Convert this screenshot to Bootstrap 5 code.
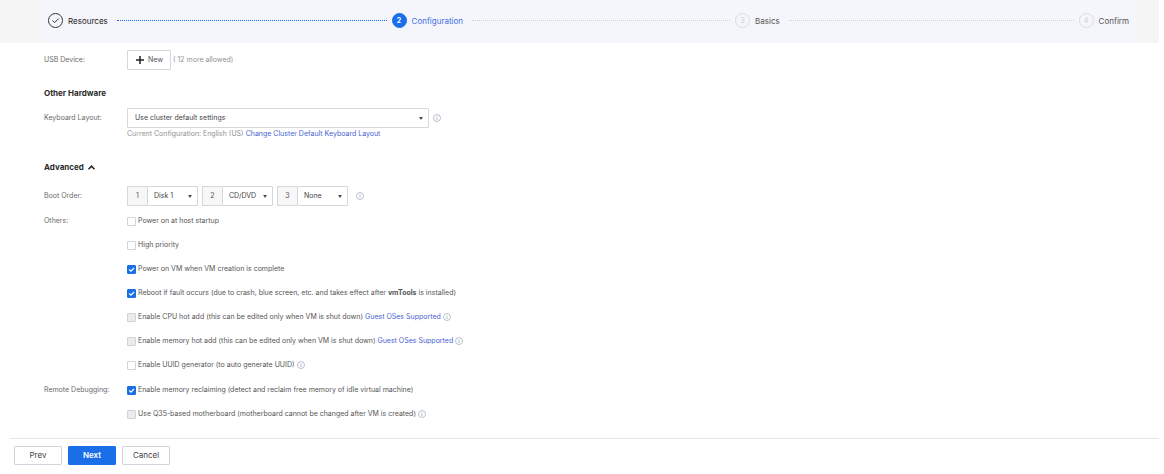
<!DOCTYPE html>
<html lang="en">
<head>
<meta charset="utf-8">
<meta name="viewport" content="width=device-width, initial-scale=1">
<title>Create Virtual Machine</title>
<link href="https://cdn.jsdelivr.net/npm/bootstrap@5.3.0/dist/css/bootstrap.min.css" rel="stylesheet">
<style>
body{font-family:Inter,"Liberation Sans",sans-serif;font-size:7px;line-height:12px;color:#555;background:#fff;padding-right:5px}
a{color:#4a5fd6;text-decoration:none}
.wizard{background:#f5f5f5;padding:0 22px 0 40px}
.steps{background:#f4f6fb;height:43px;padding:0 8px 2px;font-size:8px;color:#555;list-style:none;margin:0}
.step{flex:1 1 0}
.step:last-child{flex:none}
.step-no{width:15px;height:15px;border:1px solid #d9dce3;border-radius:50%;color:#c9cdd6;font-size:7px;line-height:13px;text-align:center;flex:none;margin-right:5px}
.step-done{color:#222}
.step-done .step-no{border-color:#333;color:#333}
.step-now{color:#3f6fe0}
.step-now .step-no{background:#1a6fe8;border-color:#1a6fe8;color:#fff;font-weight:700}
.step-line{border-top:1px dotted #cdd0d8;margin:0 5px 0 9px}
.step-done .step-line{border-top-color:#1a6fe8}
.step-no svg{display:block;margin:2px auto}
.content-pane{padding:7px 20px 0 44px}
.field-label{width:83px;flex:none;color:#6a6a6a}
.heading{font-size:8px;line-height:12px;font-weight:700;color:#2b2b2b;margin:17px 0 0}
.hint{color:#929292}
.tool-btn{font-size:7px;line-height:18px;color:#555;background:#fff;border:1px solid #d4d7de;border-radius:1px;padding:0 7px 0 8px}
.after-btn{margin-left:2px}
.drop{font-size:7px;line-height:12px;height:20px;color:#444;border:1px solid #d4d7de;border-radius:1px;padding:0 16px 0 7px;background:#fff url("data:image/svg+xml,%3Csvg xmlns='http://www.w3.org/2000/svg' viewBox='0 0 5 4'%3E%3Cpath d='M0 0h5L2.5 4z' fill='%23444'/%3E%3C/svg%3E") no-repeat right 5px center/4px 3px;appearance:none}
.layout-drop{width:302px}
.boot{width:71px}
.boot-no{width:20px;flex:none;background:#f7f7f8;border:1px solid #d4d7de;border-right:0;line-height:18px;text-align:center;color:#555}
.boot .drop{width:51px;padding:0 10px 0 6px}
.info{width:8px;height:8px;flex:none;fill:none;stroke:#9aa6b5}
.options{gap:12px}
.opt{height:12px}
.tick{appearance:none;width:9px;height:9px;flex:none;margin:1px 2px 0 0;border:1px solid #d0d3d8;border-radius:1px;background:#fff}
.tick:disabled{background:#ececee}
.tick:checked{border-color:#1a6fe8;background:#1a6fe8 url("data:image/svg+xml,%3Csvg xmlns='http://www.w3.org/2000/svg' viewBox='0 0 7 7'%3E%3Cpath d='M1.2 3.5L3 5.2 6 2' fill='none' stroke='%23fff' stroke-width='1.2'/%3E%3C/svg%3E") center/7px 7px}
.opt a{margin-left:2px}
.opt .info{margin-left:2px}
.row-gap-s{margin-top:9px}
.row-gap-m{margin-top:13px}
.actions{border-top:1px solid #e6e6e8;margin:18px 0 0 10px;padding:7px 4px 0;gap:6px}
.act{font-size:8px;line-height:17px;width:48px;padding:0;border:1px solid #d0d4dc;border-radius:1px;background:#fff;color:#444}
.act.go{background:#1a6fe8;border-color:#1a6fe8;color:#fff;font-weight:600}
</style>
</head>
<body>
<svg class="d-none"><symbol id="i-info" viewBox="0 0 8 8"><circle cx="4" cy="4" r="3.5" stroke-width=".7"/><path d="M4 3.4V6M4 2v.8" stroke-width=".8"/></symbol></svg>
<header class="wizard">
  <ol class="steps d-flex align-items-center">
    <li class="step step-done d-flex align-items-center"><span class="step-no"><svg width="9" height="9" viewBox="0 0 9 9" fill="none" stroke="#333"><path d="M1.5 4.5L3.7 6.6 7.6 2.6"/></svg></span>Resources<span class="step-line flex-grow-1"></span></li>
    <li class="step step-now d-flex align-items-center" aria-current="step"><span class="step-no">2</span>Configuration<span class="step-line flex-grow-1"></span></li>
    <li class="step d-flex align-items-center"><span class="step-no">3</span>Basics<span class="step-line flex-grow-1"></span></li>
    <li class="step d-flex align-items-center"><span class="step-no">4</span>Confirm</li>
  </ol>
</header>
<form>
<main class="content-pane">
  <div class="d-flex align-items-center">
    <span class="field-label">USB Device:</span>
    <button type="button" class="tool-btn d-flex align-items-center gap-1"><svg width="8" height="8" viewBox="0 0 8 8" stroke="#222" stroke-width="1.5"><path d="M4 0v8M0 4h8"/></svg>New</button>
    <span class="hint after-btn">( 12 more allowed)</span>
  </div>
  <h2 class="heading">Other Hardware</h2>
  <div class="d-flex align-items-start row-gap-s">
    <label class="field-label pt-1" for="kbd">Keyboard Layout:</label>
    <div>
      <div class="d-flex align-items-center gap-1"><select id="kbd" class="drop layout-drop"><option>Use cluster default settings</option></select><svg class="info"><use href="#i-info"/></svg></div>
      <div class="hint">Current Configuration: English (US) <a href="#">Change Cluster Default Keyboard Layout</a></div>
    </div>
  </div>
  <h2 class="heading pt-1 d-flex align-items-center gap-1">Advanced <svg width="7" height="5" viewBox="0 0 7 5" fill="none" stroke="#222" stroke-width="1.5"><path d="M.5 4.3L3.5 1.2 6.5 4.3"/></svg></h2>
  <div class="d-flex align-items-center row-gap-m">
    <span class="field-label">Boot Order:</span>
    <div class="d-flex align-items-center gap-1">
      <div class="boot d-flex"><label class="boot-no" for="b1">1</label><select id="b1" class="drop"><option>Disk 1</option></select></div>
      <div class="boot d-flex"><label class="boot-no" for="b2">2</label><select id="b2" class="drop"><option>CD/DVD</option></select></div>
      <div class="boot d-flex"><label class="boot-no" for="b3">3</label><select id="b3" class="drop"><option>None</option></select></div>
      <svg class="info ms-1"><use href="#i-info"/></svg>
    </div>
  </div>
  <div class="d-flex row-gap-s">
    <span class="field-label">Others:</span>
    <div class="options d-flex flex-column">
      <div class="opt d-flex align-items-center"><input class="tick" type="checkbox" id="o1"><label for="o1">Power on at host startup</label></div>
      <div class="opt d-flex align-items-center"><input class="tick" type="checkbox" id="o2"><label for="o2">High priority</label></div>
      <div class="opt d-flex align-items-center"><input class="tick" type="checkbox" id="o3" checked><label for="o3">Power on VM when VM creation is complete</label></div>
      <div class="opt d-flex align-items-center"><input class="tick" type="checkbox" id="o4" checked><label for="o4">Reboot if fault occurs (due to crash, blue screen, etc. and takes effect after <b>vmTools</b> is installed)</label></div>
      <div class="opt d-flex align-items-center"><input class="tick" type="checkbox" id="o5" disabled><label for="o5">Enable CPU hot add (this can be edited only when VM is shut down)</label><a href="#">Guest OSes Supported</a><svg class="info"><use href="#i-info"/></svg></div>
      <div class="opt d-flex align-items-center"><input class="tick" type="checkbox" id="o6" disabled><label for="o6">Enable memory hot add (this can be edited only when VM is shut down)</label><a href="#">Guest OSes Supported</a><svg class="info"><use href="#i-info"/></svg></div>
      <div class="opt d-flex align-items-center"><input class="tick" type="checkbox" id="o7"><label for="o7">Enable UUID generator (to auto generate UUID)</label><svg class="info"><use href="#i-info"/></svg></div>
    </div>
  </div>
  <div class="d-flex row-gap-m">
    <span class="field-label">Remote Debugging:</span>
    <div class="options d-flex flex-column">
      <div class="opt d-flex align-items-center"><input class="tick" type="checkbox" id="o8" checked><label for="o8">Enable memory reclaiming (detect and reclaim free memory of idle virtual machine)</label></div>
      <div class="opt d-flex align-items-center"><input class="tick" type="checkbox" id="o9" disabled><label for="o9">Use Q35-based motherboard (motherboard cannot be changed after VM is created)</label><svg class="info"><use href="#i-info"/></svg></div>
    </div>
  </div>
</main>
<footer class="actions d-flex">
  <button type="button" class="act">Prev</button>
  <button type="submit" class="act go">Next</button>
  <button type="button" class="act">Cancel</button>
</footer>
</form>
<script src="https://cdn.jsdelivr.net/npm/bootstrap@5.3.0/dist/js/bootstrap.bundle.min.js"></script>
</body>
</html>
